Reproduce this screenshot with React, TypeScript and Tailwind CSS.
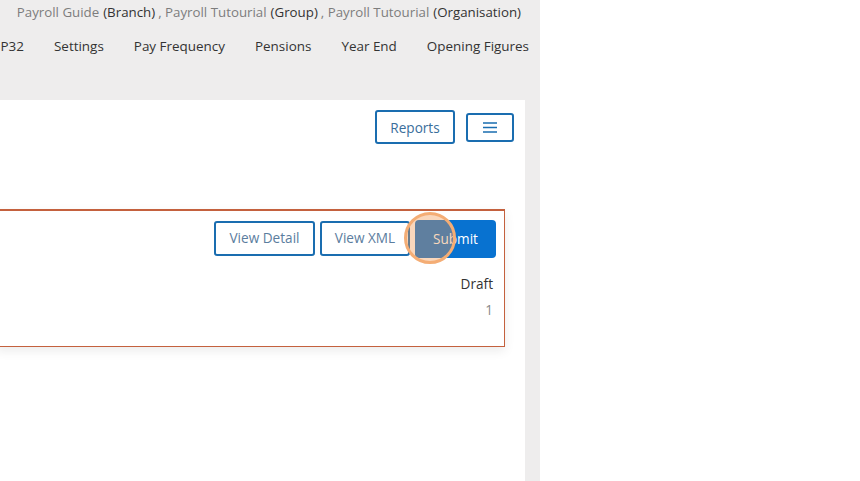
import React from "react";

export default function App() {
  const font = { fontFamily: '"Open Sans", "Noto Sans", sans-serif' };
  return (
    <div className="w-[860px] h-[481px] flex bg-white overflow-hidden" style={font}>
      <div className="w-[540px] h-full bg-[#eeeded] flex flex-col overflow-hidden">
        <div className="h-[25px] flex items-center justify-end pr-[19px] text-[13.3px] whitespace-nowrap pt-[1px]">
          <span className="text-[#7d7d7d]">Payroll Guide</span>
          <span className="text-[#333] ml-[4px]">(Branch)</span>
          <span className="text-[#7d7d7d] ml-[3px]">, Payroll Tutourial</span>
          <span className="text-[#333] ml-[4px]">(Group)</span>
          <span className="text-[#7d7d7d] ml-[3px]">, Payroll Tutourial</span>
          <span className="text-[#333] ml-[4px]">(Organisation)</span>
        </div>
        <div className="h-[42px] flex items-center justify-end gap-[30px] pr-[11px] text-[13.45px] text-[#333] whitespace-nowrap overflow-hidden">
          <span>P32</span>
          <span>Settings</span>
          <span>Pay Frequency</span>
          <span>Pensions</span>
          <span>Year End</span>
          <span>Opening Figures</span>
        </div>
        <div className="h-[33px]" />
        <div className="w-[525px] flex-1 bg-white flex flex-col">
          <div className="flex justify-end items-start gap-[11px] pr-[11px] pt-[10px]">
            <button className="w-[80px] h-[34px] pt-[2px] border-2 border-[#1a6db0] rounded-[3px] text-[13.6px] text-[#3a6e9b] flex items-center justify-center">
              Reports
            </button>
            <button className="w-[48px] h-[29px] mt-[3px] border-2 border-[#1a6db0] rounded-[3px] flex items-center justify-center">
              <svg width="14" height="11" viewBox="0 0 14 11">
                <path d="M0 1h14M0 5.5h14M0 10h14" stroke="#1a6db0" strokeWidth="1.6" />
              </svg>
            </button>
          </div>
          <div className="h-[65px]" />
          <div className="-ml-[4px] mr-[20px] h-[138px] border border-t-2 border-[#c4613e] bg-white shadow-[0_4px_10px_rgba(0,0,0,0.08)] flex flex-col pr-[8px]">
            <div className="flex justify-end gap-[5px] pt-[10px]">
              <button className="w-[101px] h-[35px] border-2 border-[#1a6db0] rounded-[3px] text-[13.6px] text-[#5b7d9e] flex items-center justify-center">
                View Detail
              </button>
              <button className="w-[90px] h-[35px] border-2 border-[#1a6db0] rounded-[3px] text-[13.6px] text-[#5b7d9e] flex items-center justify-center">
                View XML
              </button>
              <div className="relative">
                <button className="w-[81px] h-[38px] -mt-[1px] bg-[#0872d0] rounded-[4px] text-[13.6px] text-white flex items-center justify-center">
                  Submit
                </button>
                <div className="absolute left-[-11px] top-[-9px] w-[52px] h-[52px] rounded-full bg-[rgba(240,150,80,0.38)] border-[3px] border-[#f4ad75]" />
              </div>
            </div>
            <div className="text-right text-[13.6px] text-[#333] pr-[3px] mt-[16px] leading-[20px]">Draft</div>
            <div className="text-right text-[13.6px] text-[#888] pr-[3px] mt-[6px] leading-[20px]">1</div>
          </div>
        </div>
      </div>
      <div className="flex-1 bg-white" />
    </div>
  );
}
